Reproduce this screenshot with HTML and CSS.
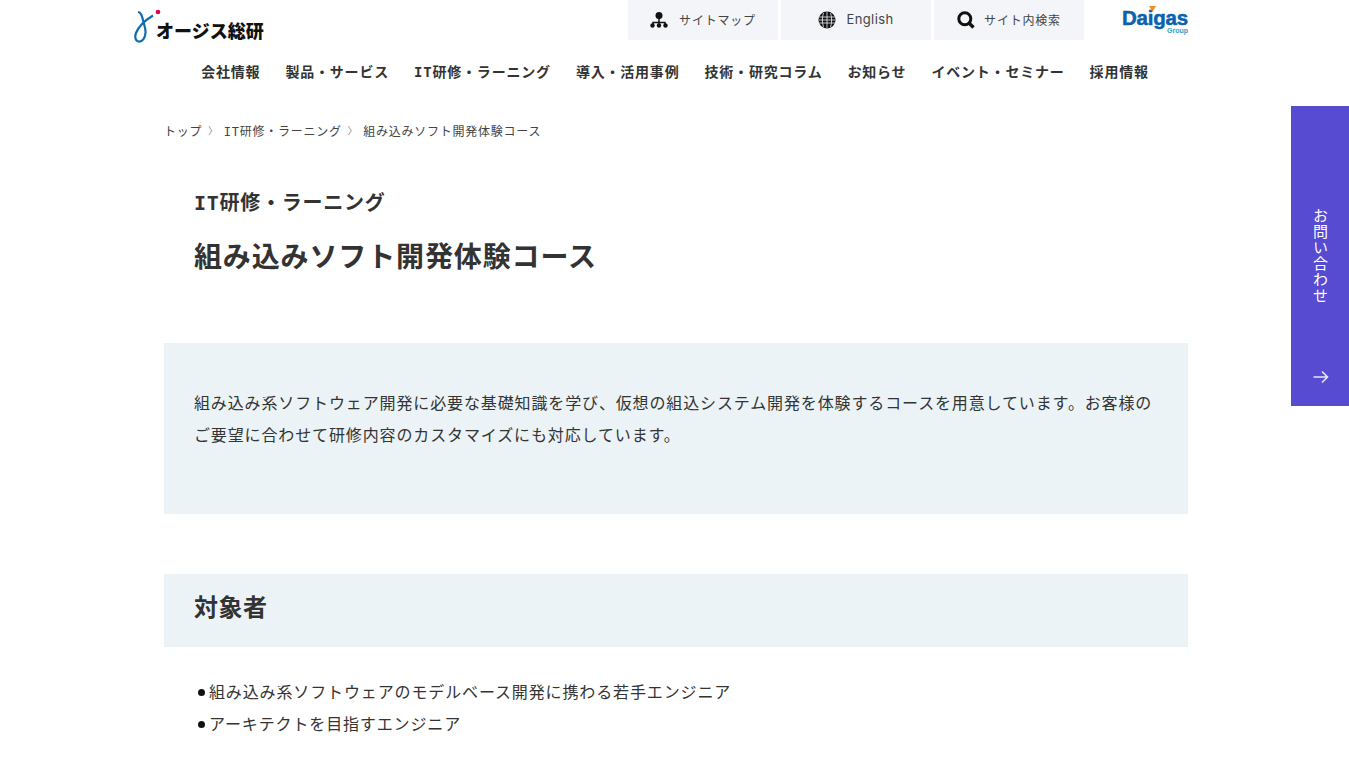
FILE: index.html
```html
<!DOCTYPE html>
<html lang="ja">
<head>
<meta charset="utf-8">
<title>組み込みソフト開発体験コース</title>
<link rel="stylesheet" href="styles.css">
</head>
<body>
<header class="header">
  <div class="top">
    <a class="logo" href="#">
      <svg class="logo-mark" width="30" height="36" viewBox="0 0 30 36"><circle cx="24" cy="4" r="2.300" fill="#e6004c"/><path d="M4 4C7 4 8 8 9 12c1 5 3 9 2.500 13-.5 5-3 9-7 8.500C1.500 33 .5 29 2 25c2-5 8-12 17-17.500" fill="none" stroke="#0f6cb0" stroke-width="2.200"/></svg>
      <span class="logo-text">オージス総研</span>
    </a>
    <div class="tools">
      <a class="tool tool-a" href="#"><svg width="18" height="16" viewBox="0 0 18 16"><circle cx="9" cy="3.500" r="3.500" fill="#111"/><path d="M9 6v6M3 13v-2.500h12V13" fill="none" stroke="#111" stroke-width="1.500"/><circle cx="2.500" cy="13.500" r="2.200" fill="#111"/><circle cx="9" cy="13.500" r="2.200" fill="#111"/><circle cx="15.500" cy="13.500" r="2.200" fill="#111"/></svg><span>サイトマップ</span></a>
      <a class="tool tool-b" href="#"><svg width="18" height="18" viewBox="0 0 18 18"><circle cx="9" cy="9" r="8.500" fill="#111"/><path d="M1 6h16M1 9h16M1 12h16M9 1v16M5.500 2c-1.500 4-1.500 10 0 14M12.500 2c1.500 4 1.500 10 0 14" fill="none" stroke="#f3f5f9" stroke-width=".8"/></svg><span>English</span></a>
      <a class="tool tool-c" href="#"><svg width="18" height="18" viewBox="0 0 18 18"><circle cx="7.800" cy="7.800" r="6" fill="none" stroke="#111" stroke-width="3"/><path d="M12 12l4.500 4.500" stroke="#111" stroke-width="3.400"/></svg><span>サイト内検索</span></a>
      <a class="daigas" href="#">
        <span class="daigas-name">Daigas</span>
        <span class="daigas-group">Group</span>
        <svg class="daigas-tri" width="7" height="6" viewBox="0 0 7 6"><path d="M0 0h7L3.500 6z" fill="#e8912d"/></svg>
      </a>
    </div>
  </div>
  <nav class="nav">
    <a href="#">会社情報</a>
    <a href="#">製品・サービス</a>
    <a href="#"><span class="latin">IT</span>研修・ラーニング</a>
    <a href="#">導入・活用事例</a>
    <a href="#">技術・研究コラム</a>
    <a href="#">お知らせ</a>
    <a href="#">イベント・セミナー</a>
    <a href="#">採用情報</a>
  </nav>
</header>
<a class="contact" href="#">
  <span class="contact-text">お問い合わせ</span>
  <svg class="contact-arrow" width="16" height="14" viewBox="0 0 16 14"><path d="M0.500 7H14M9 1.500l5.500 5.500-5.500 5.500" fill="none" stroke="#e6e4fa" stroke-width="1.700"/></svg>
</a>
<main class="main">
  <ol class="crumbs">
    <li>トップ</li>
    <li class="sep">〉</li>
    <li><span class="latin">IT</span>研修・ラーニング</li>
    <li class="sep">〉</li>
    <li>組み込みソフト開発体験コース</li>
  </ol>
  <div class="heading">
    <p class="category"><span class="latin">IT</span>研修・ラーニング</p>
    <h1 class="title">組み込みソフト開発体験コース</h1>
  </div>
  <section class="intro">
    <p>組み込み系ソフトウェア開発に必要な基礎知識を学び、仮想の組込システム開発を体験するコースを用意しています。お客様のご要望に合わせて研修内容のカスタマイズにも対応しています。</p>
  </section>
  <h2 class="section-title">対象者</h2>
  <ul class="list">
    <li>組み込み系ソフトウェアのモデルベース開発に携わる若手エンジニア</li>
    <li>アーキテクトを目指すエンジニア</li>
  </ul>
</main>
</body>
</html>
```
FILE: styles.css
```css
* { box-sizing: border-box; }
html, body { margin: 0; padding: 0; }
body {
  height: 765px;
  overflow: hidden;
  background: #fff;
  color: #333;
  font-family: "Noto Sans CJK JP", "Noto Sans", sans-serif;
  position: relative;
}
a { color: inherit; text-decoration: none; }
.latin { font-family: "DejaVu Sans Mono", monospace; }
.header { width: 1054px; margin-left: 134px; }
.top { display: flex; justify-content: space-between; height: 40px; }
.logo { display: flex; align-items: flex-end; height: 45px; padding-bottom: 1px; }
.logo-mark { display: block; margin-right: -8px; }
.logo-text { font-size: 18px; font-weight: 900; color: #111; letter-spacing: 0; line-height: 26px; white-space: nowrap; position: relative; top: -1px; }
.tools { display: flex; gap: 3px; }
.tool { width: 150px; height: 40px; background: #f3f5f9; display: flex; align-items: center; justify-content: center; gap: 11px; font-size: 12px; letter-spacing: .8px; color: #444; }
.tool span { padding-bottom: 2px; }
.tool-b { gap: 10px; }
.tool-c { gap: 9px; }
.tool-b span { font-family: Inter, sans-serif; font-size: 13px; letter-spacing: .4px; }
.daigas { position: relative; width: 66px; margin-left: 35px; height: 40px; display: block; }
.daigas-name { position: absolute; right: 0; top: 8px; font: 700 20.500px/19px "Liberation Sans", sans-serif; color: #0a62ad; letter-spacing: -.2px; -webkit-text-stroke: .5px #0a62ad; }
.daigas-group { position: absolute; right: 0; top: 27px; font: 700 7px/7px "Liberation Sans", sans-serif; color: #2f9cc9; }
.daigas-tri { position: absolute; left: 27px; top: 6px; }
.nav { display: flex; justify-content: center; gap: 25px; height: 25px; margin-top: 19px; font-size: 14px; letter-spacing: .8px; font-weight: 700; line-height: 24px; color: #333; padding-left: 28px; white-space: nowrap; }
.contact { position: absolute; left: 1291px; top: 106px; width: 58px; height: 300px; background: #574bd2; color: #fff; display: block; }
.contact-text { position: absolute; left: 20px; top: 102px; width: 18px; writing-mode: vertical-rl; font-size: 15px; line-height: 18px; letter-spacing: 1px; white-space: nowrap; }
.contact-arrow { position: absolute; left: 22px; top: 264px; }
.main { width: 1024px; margin-left: 164px; }
.crumbs { list-style: none; display: flex; margin: 37px 0 0; padding: 0; height: 20px; font-size: 12px; letter-spacing: .75px; line-height: 20px; color: #444; white-space: nowrap; }
.crumbs .sep { color: #888; font-size: 10px; letter-spacing: 0; width: 21.500px; text-align: center; }
.heading { padding-left: 30px; }
.category { margin: 46px 0 0; font-size: 20px; letter-spacing: .75px; font-weight: 700; line-height: 30px; color: #333; }
.title { margin: 17px 0 0; font-size: 28px; letter-spacing: .87px; font-weight: 700; line-height: 40px; color: #333; }
.intro { margin-top: 68px; height: 171px; background: #ebf3f6; padding: 43px 30px 0; font-size: 16px; letter-spacing: .87px; line-height: 32px; }
.intro p { margin: 0; }
.section-title { margin: 60px 0 0; height: 73px; background: #ebf3f6; padding-left: 30px; font-size: 24px; letter-spacing: .5px; font-weight: 700; line-height: 64px; color: #333; }
.list { list-style: none; margin: 28px 0 0; padding: 0 0 0 45px; font-size: 16px; letter-spacing: .87px; line-height: 32px; }
.list li { position: relative; }
.list li::before { content: ""; position: absolute; left: -11px; top: 14px; width: 7px; height: 7px; border-radius: 50%; background: #111; }
```
